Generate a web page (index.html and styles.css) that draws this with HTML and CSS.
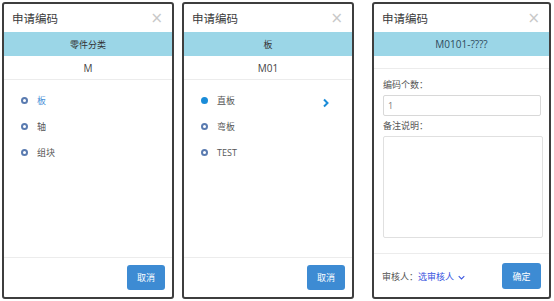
FILE: index.html
```html
<!DOCTYPE html>
<html lang="zh-CN">
<head>
<meta charset="UTF-8" />
<title>申请编码</title>
<link rel="stylesheet" href="styles.css">
</head>
<body>
  <div class="screens">
    <!-- step 1: category -->
    <div class="panel panel-a">
      <div class="panel-head">
        <span class="panel-title">申请编码</span>
        <span class="close">&times;</span>
      </div>
      <div class="band">零件分类</div>
      <div class="sub">M</div>
      <ul class="options">
        <li class="option active"><span class="radio"></span>板</li>
        <li class="option"><span class="radio"></span>轴</li>
        <li class="option"><span class="radio"></span>组块</li>
      </ul>
      <div class="panel-foot">
        <button class="btn">取消</button>
      </div>
    </div>

    <!-- step 2: sub category -->
    <div class="panel panel-b">
      <div class="panel-head">
        <span class="panel-title">申请编码</span>
        <span class="close">&times;</span>
      </div>
      <div class="band">板</div>
      <div class="sub">M01</div>
      <ul class="options">
        <li class="option checked"><span class="radio"></span>直板
          <svg class="chevron" viewBox="0 0 8 10" aria-hidden="true"><path d="M2 1.5l3.5 3.5L2 8.5" /></svg>
        </li>
        <li class="option"><span class="radio"></span>弯板</li>
        <li class="option"><span class="radio"></span>TEST</li>
      </ul>
      <div class="panel-foot">
        <button class="btn">取消</button>
      </div>
    </div>

    <!-- step 3: form -->
    <div class="panel panel-c">
      <div class="panel-head">
        <span class="panel-title">申请编码</span>
        <span class="close">&times;</span>
      </div>
      <div class="band band-code">M0101-????</div>
      <div class="sub sub-empty"></div>
      <div class="form">
        <label class="field-label">编码个数：</label>
        <input class="field-input" type="text" value="1">
        <label class="field-label">备注说明：</label>
        <textarea class="field-area"></textarea>
      </div>
      <div class="panel-foot panel-foot-form">
        <div class="reviewer">审核人：<span class="reviewer-pick">选审核人
          <svg class="down" viewBox="0 0 10 6" aria-hidden="true"><path d="M1 1l4 4 4-4" /></svg></span>
        </div>
        <button class="btn">确定</button>
      </div>
    </div>
  </div>
</body>
</html>
```

FILE: styles.css
```css
body {
  margin: 0;
  background: #fff;
  font-family: "Noto Sans CJK SC", "Noto Sans", sans-serif;
  color: #444;
}

.screens {
  display: flex;
  padding: 2px 0 0 2px;
  gap: 8px;
}

.panel {
  height: 293px;
  border: 2px solid #3e3e3e;
  border-radius: 3px;
  display: flex;
  flex-direction: column;
  background: #fff;
}

.panel-a { width: 168px; }
.panel-b { width: 168px; }
.panel-c { width: 175px; margin-left: 10px; }

.panel-head {
  height: 28px;
  display: flex;
  align-items: center;
  justify-content: space-between;
  padding: 0 9px 0 8px;
  flex-shrink: 0;
}

.panel-title {
  font-size: 11.5px;
  color: #3a3a3a;
}

.close {
  font-family: "DejaVu Sans", sans-serif;
  font-size: 15px;
  color: #c8c8c8;
  line-height: 1;
}

.band {
  height: 24px;
  background: #9bd6e7;
  display: flex;
  align-items: center;
  justify-content: center;
  font-size: 9px;
  color: #333;
  flex-shrink: 0;
}

.band-code {
  font-size: 10px;
  color: #2e4a5c;
  font-family: "Open Sans", "Noto Sans CJK SC", sans-serif;
}

.sub {
  height: 23px;
  border-bottom: 1px solid #ececec;
  display: flex;
  align-items: center;
  justify-content: center;
  font-size: 10px;
  font-family: "Open Sans", sans-serif;
  color: #444;
  flex-shrink: 0;
}

.sub-empty { height: 12px; }

.options {
  list-style: none;
  margin: 0;
  padding: 7px 0 0 0;
  flex: 1;
}

.option {
  height: 26px;
  display: flex;
  align-items: center;
  padding-left: 17px;
  font-size: 9px;
  color: #555;
  font-family: "Open Sans", "Noto Sans CJK SC", sans-serif;
}

.option.active { color: #4a8fd8; }

.radio {
  width: 3px;
  height: 3px;
  border: 2px solid #5a7bb0;
  border-radius: 50%;
  margin-right: 9px;
}

.option.checked .radio {
  background: #1a8cd8;
  border-color: #1a8cd8;
}

.chevron {
  width: 8px;
  height: 10px;
  margin-left: auto;
  margin-right: 22px;
  margin-top: 6px;
  fill: none;
  stroke: #1a8cd8;
  stroke-width: 2;
}

.panel-foot {
  border-top: 1px solid #ececec;
  display: flex;
  align-items: flex-start;
  justify-content: flex-end;
  padding: 7px 7px 0 0;
  box-sizing: border-box;
  height: 40px;
  flex-shrink: 0;
}

.panel-foot-form {
  height: 44px;
  justify-content: space-between;
  padding: 9px 8px 0 8px;
}

.btn {
  width: 38px;
  height: 25px;
  border: none;
  border-radius: 3px;
  background: #3d8bd3;
  color: #fff;
  font-family: "Noto Sans CJK SC", sans-serif;
  font-size: 9px;
  padding: 0;
}

.panel-c .btn { width: 39px; height: 26px; }

.form {
  flex: 1;
  display: flex;
  flex-direction: column;
  padding: 10px 8px 0 9px;
}

.field-label {
  font-size: 9px;
  color: #555;
  line-height: 12px;
}

.field-input {
  margin: 4px 0 4px;
  height: 21px;
  box-sizing: border-box;
  width: 158px;
  border: 1px solid #d8d8d8;
  border-radius: 2px;
  padding: 0 4px;
  font-family: "Open Sans", sans-serif;
  font-size: 9px;
  color: #777;
}

.field-area {
  margin-top: 4px;
  height: 102px;
  box-sizing: border-box;
  width: 160px;
  border: 1px solid #e0e0e0;
  border-radius: 2px;
  resize: none;
}

.reviewer {
  font-size: 9px;
  color: #555;
  align-self: center;
  margin-top: -8px;
}

.reviewer-pick { color: #3a55e0; }

.down {
  width: 7px;
  height: 5px;
  fill: none;
  stroke: #3a55e0;
  stroke-width: 1.5;
  margin-left: 2px;
}
```
